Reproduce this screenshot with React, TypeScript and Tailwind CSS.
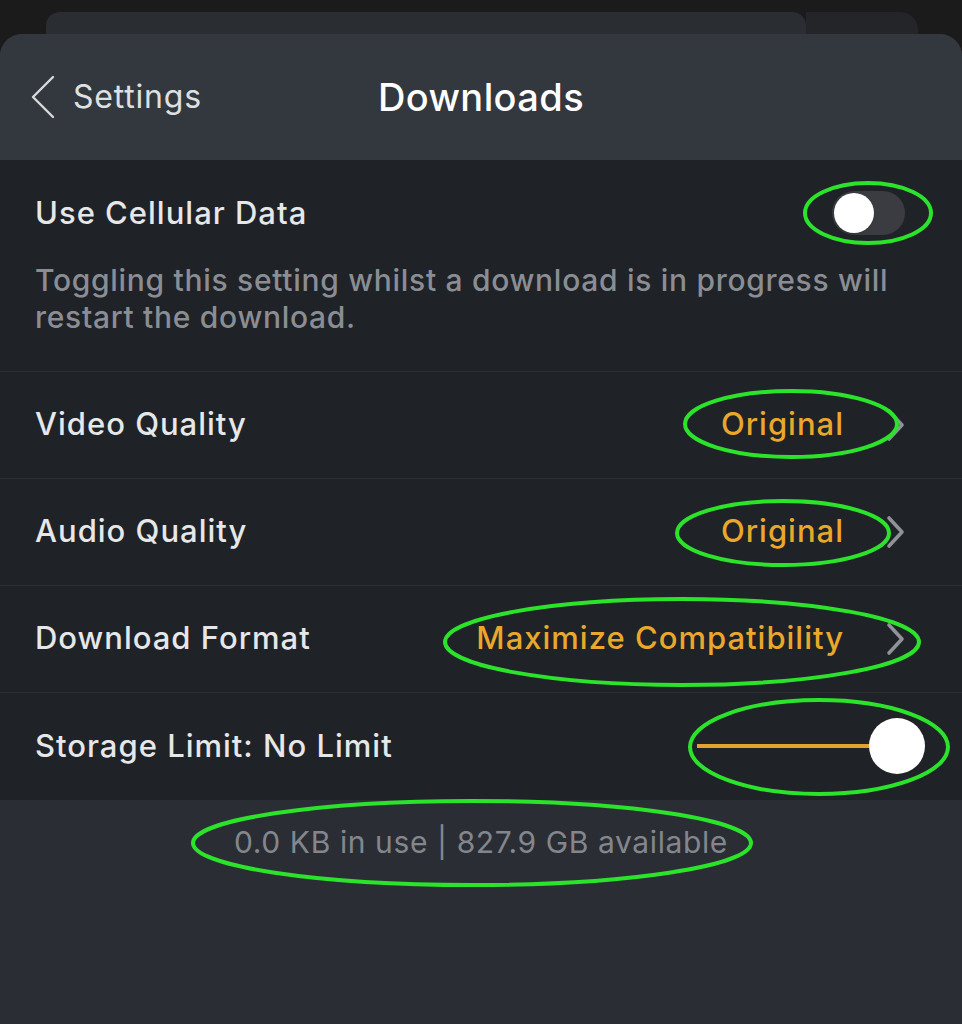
const ROWS = [
    { label: 'Video Quality', value: 'Original' },
    { label: 'Audio Quality', value: 'Original' },
    { label: 'Download Format', value: 'Maximize Compatibility' },
];

function Annotations() {
    // hand-drawn green rings from the screenshot
    return (
        <svg className="absolute inset-0 pointer-events-none" width="962" height="1024" viewBox="0 0 962 1024">
            <g fill="none" stroke="#2be32b" strokeWidth="4">
                <ellipse cx="868" cy="213" rx="63" ry="30" />
                <ellipse cx="791" cy="424" rx="106" ry="33" />
                <ellipse cx="783" cy="533" rx="106" ry="32" />
                <ellipse cx="682" cy="642" rx="237" ry="43" />
                <ellipse cx="819" cy="747" rx="129" ry="47" />
                <ellipse cx="472" cy="843" rx="279" ry="42" />
            </g>
        </svg>
    );
}

export default function App() {
    return (
        <div
            className="relative w-[962px] h-[1024px] overflow-hidden bg-[#1b1b1c]"
            style={{ fontFamily: 'Inter, "Noto Sans", sans-serif' }}
        >
            <div className="h-[12px]" />
            <div className="flex h-[22px]">
                <div className="ml-[46px] w-[760px] rounded-t-[14px] bg-[#2a2d32]" />
                <div className="w-[112px] rounded-tr-[18px] bg-[#232528]" />
            </div>

            <div className="rounded-t-[22px] bg-[#2a2e34] flex flex-col h-[990px]">
                <div className="h-[126px] bg-[#33383e] rounded-t-[22px] flex items-center relative">
                    <div className="flex items-center pl-[30px] text-[#e4e5e7]">
                        <svg width="26" height="44" viewBox="0 0 26 44" className="mr-[17px]">
                            <path d="M23 2 L3 22 L23 42" fill="none" stroke="#d8d9db" strokeWidth="2.4" strokeLinecap="round" strokeLinejoin="round" />
                        </svg>
                        <span className="text-[32px] tracking-[0.8px] text-[#dfe0e2]">Settings</span>
                    </div>
                    <div className="absolute left-0 right-0 text-center text-[38px] tracking-[0.4px] font-medium text-white">Downloads</div>
                </div>

                <div className="bg-[#1f2226]">
                    <div className="px-[35px] pt-[30px] pb-[35px] border-b border-[#2c3035]">
                        <div className="flex items-center justify-between">
                            <span className="text-[31px] font-medium tracking-[1px] text-[#e6e7e9]">Use Cellular Data</span>
                            <div className="w-[73px] h-[44px] mr-[22px] rounded-full bg-[#3a3c41] flex items-center px-[2px]">
                                <div className="w-[40px] h-[40px] rounded-full bg-white shadow" />
                            </div>
                        </div>
                        <p className="mt-[25px] text-[30px] leading-[37px] tracking-[0.7px] text-[#8a8e94] font-medium">
                            Toggling this setting whilst a download is in progress will restart the download.
                        </p>
                    </div>

                    {ROWS.map((row) => (
                        <div key={row.label} className="h-[107px] pl-[35px] pr-[57px] flex items-center justify-between border-b border-[#2c3035]">
                            <span className="text-[31px] font-medium tracking-[1px] text-[#e6e7e9]">{row.label}</span>
                            <div className="flex items-center">
                                <span className="text-[31px] font-medium tracking-[1px] text-[#e9a82b]">{row.value}</span>
                                <svg width="19" height="34" viewBox="0 0 19 34" className="ml-[42px]">
                                    <path d="M3 3 L16 17 L3 31" fill="none" stroke="#8f9298" strokeWidth="3.6" strokeLinecap="round" strokeLinejoin="round" />
                                </svg>
                            </div>
                        </div>
                    ))}

                    <div className="h-[107px] pl-[35px] pr-[37px] flex items-center justify-between">
                        <span className="text-[31px] font-medium tracking-[1px] text-[#e6e7e9]">Storage Limit: No Limit</span>
                        <div className="flex items-center">
                            <div className="w-[172px] h-[4px] bg-[#e3a22e]" />
                            <div className="w-[56px] h-[56px] rounded-full bg-white" />
                        </div>
                    </div>
                </div>

                <div className="pt-[20px] text-center text-[30px] tracking-[0.6px] text-[#83878d]">
                    0.0 KB in use | 827.9 GB available
                </div>
            </div>

            <Annotations />
        </div>
    );
}
